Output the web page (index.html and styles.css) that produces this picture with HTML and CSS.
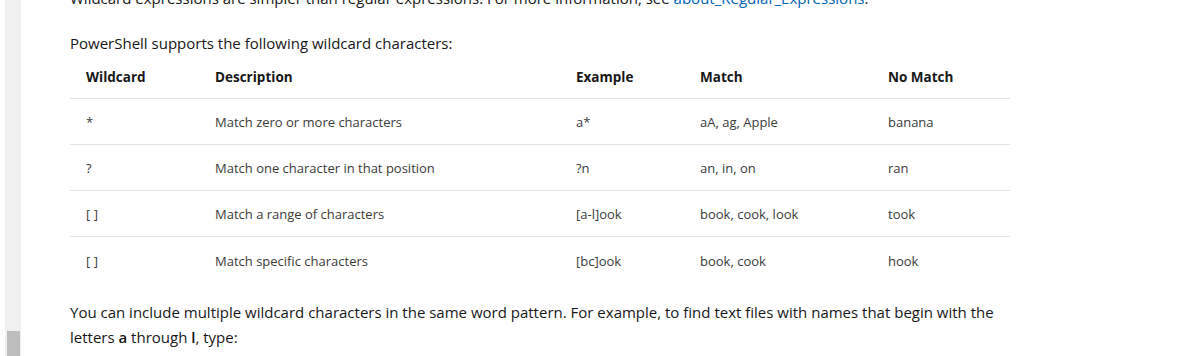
FILE: index.html
```html
<!DOCTYPE html>
<html lang="en">
<head>
    <meta charset="UTF-8">
    <title>about_Wildcards</title>
    <link rel="stylesheet" href="styles.css">
</head>
<body>
    <div class="page">
        <div class="rail">
            <div class="rail-thumb"></div>
        </div>

        <main class="content">
            <p class="lead">Wildcard expressions are simpler than regular expressions. For more information, see <a href="#">about_Regular_Expressions</a>.</p>
            <p>PowerShell supports the following wildcard characters:</p>

            <table class="wildcards">
                <colgroup>
                    <col class="col-wild">
                    <col class="col-desc">
                    <col class="col-example">
                    <col class="col-match">
                    <col class="col-nomatch">
                </colgroup>
                <thead>
                    <tr>
                        <th>Wildcard</th>
                        <th>Description</th>
                        <th>Example</th>
                        <th>Match</th>
                        <th>No Match</th>
                    </tr>
                </thead>
                <tbody>
                    <tr>
                        <td>*</td>
                        <td>Match zero or more characters</td>
                        <td>a*</td>
                        <td>aA, ag, Apple</td>
                        <td>banana</td>
                    </tr>
                    <tr>
                        <td>?</td>
                        <td>Match one character in that position</td>
                        <td>?n</td>
                        <td>an, in, on</td>
                        <td>ran</td>
                    </tr>
                    <tr>
                        <td>[ ]</td>
                        <td>Match a range of characters</td>
                        <td>[a-l]ook</td>
                        <td>book, cook, look</td>
                        <td>took</td>
                    </tr>
                    <tr>
                        <td>[ ]</td>
                        <td>Match specific characters</td>
                        <td>[bc]ook</td>
                        <td>book, cook</td>
                        <td>hook</td>
                    </tr>
                </tbody>
            </table>

            <p class="after-table">You can include multiple wildcard characters in the same word pattern. For example, to find text files with names that begin with the letters <strong>a</strong> through <strong>l</strong>, type:</p>
        </main>
    </div>
</body>
</html>
```

FILE: styles.css
```css
body {
    margin: 0;
    background-color: #ffffff;
    color: #171717;
    font-family: "Open Sans", "Noto Sans", sans-serif;
    overflow: hidden;
}

.page {
    display: flex;
    height: 356px;
}

/* fake scrollbar down the left edge */
.rail {
    display: flex;
    flex-direction: column;
    width: 16px;
    margin-left: 5px;
    background-color: #f0f0f0;
}

.rail-thumb {
    margin-top: auto;
    margin-left: 2px;
    width: 13px;
    height: 25px;
    background-color: #bdbdbd;
}

.content {
    width: 940px;
    padding-left: 49px;
}

p {
    margin: 0;
    font-size: 15px;
    line-height: 25px;
}

.lead {
    margin-top: -14px;
    margin-bottom: 20px;
}

a {
    color: #0065b3;
    text-decoration: none;
}

strong {
    font-weight: 600;
}

.wildcards {
    width: 940px;
    border-collapse: collapse;
    table-layout: fixed;
    font-size: 13px;
}

.col-wild { width: 129px; }
.col-desc { width: 361px; }
.col-example { width: 124px; }
.col-match { width: 188px; }
.col-nomatch { width: 138px; }

.wildcards th {
    height: 42px;
    padding: 0 16px;
    text-align: left;
    font-size: 13.5px;
    font-weight: 700;
    color: #171717;
    border-bottom: 1px solid #e3e3e3;
}

.wildcards td {
    height: 44px;
    padding: 1px 16px 0;
    color: #3b3b3b;
    border-bottom: 1px solid #e3e3e3;
}

.wildcards tbody tr:last-child td {
    border-bottom: none;
    height: 45px;
}

.after-table {
    margin-top: 17px;
}
```
